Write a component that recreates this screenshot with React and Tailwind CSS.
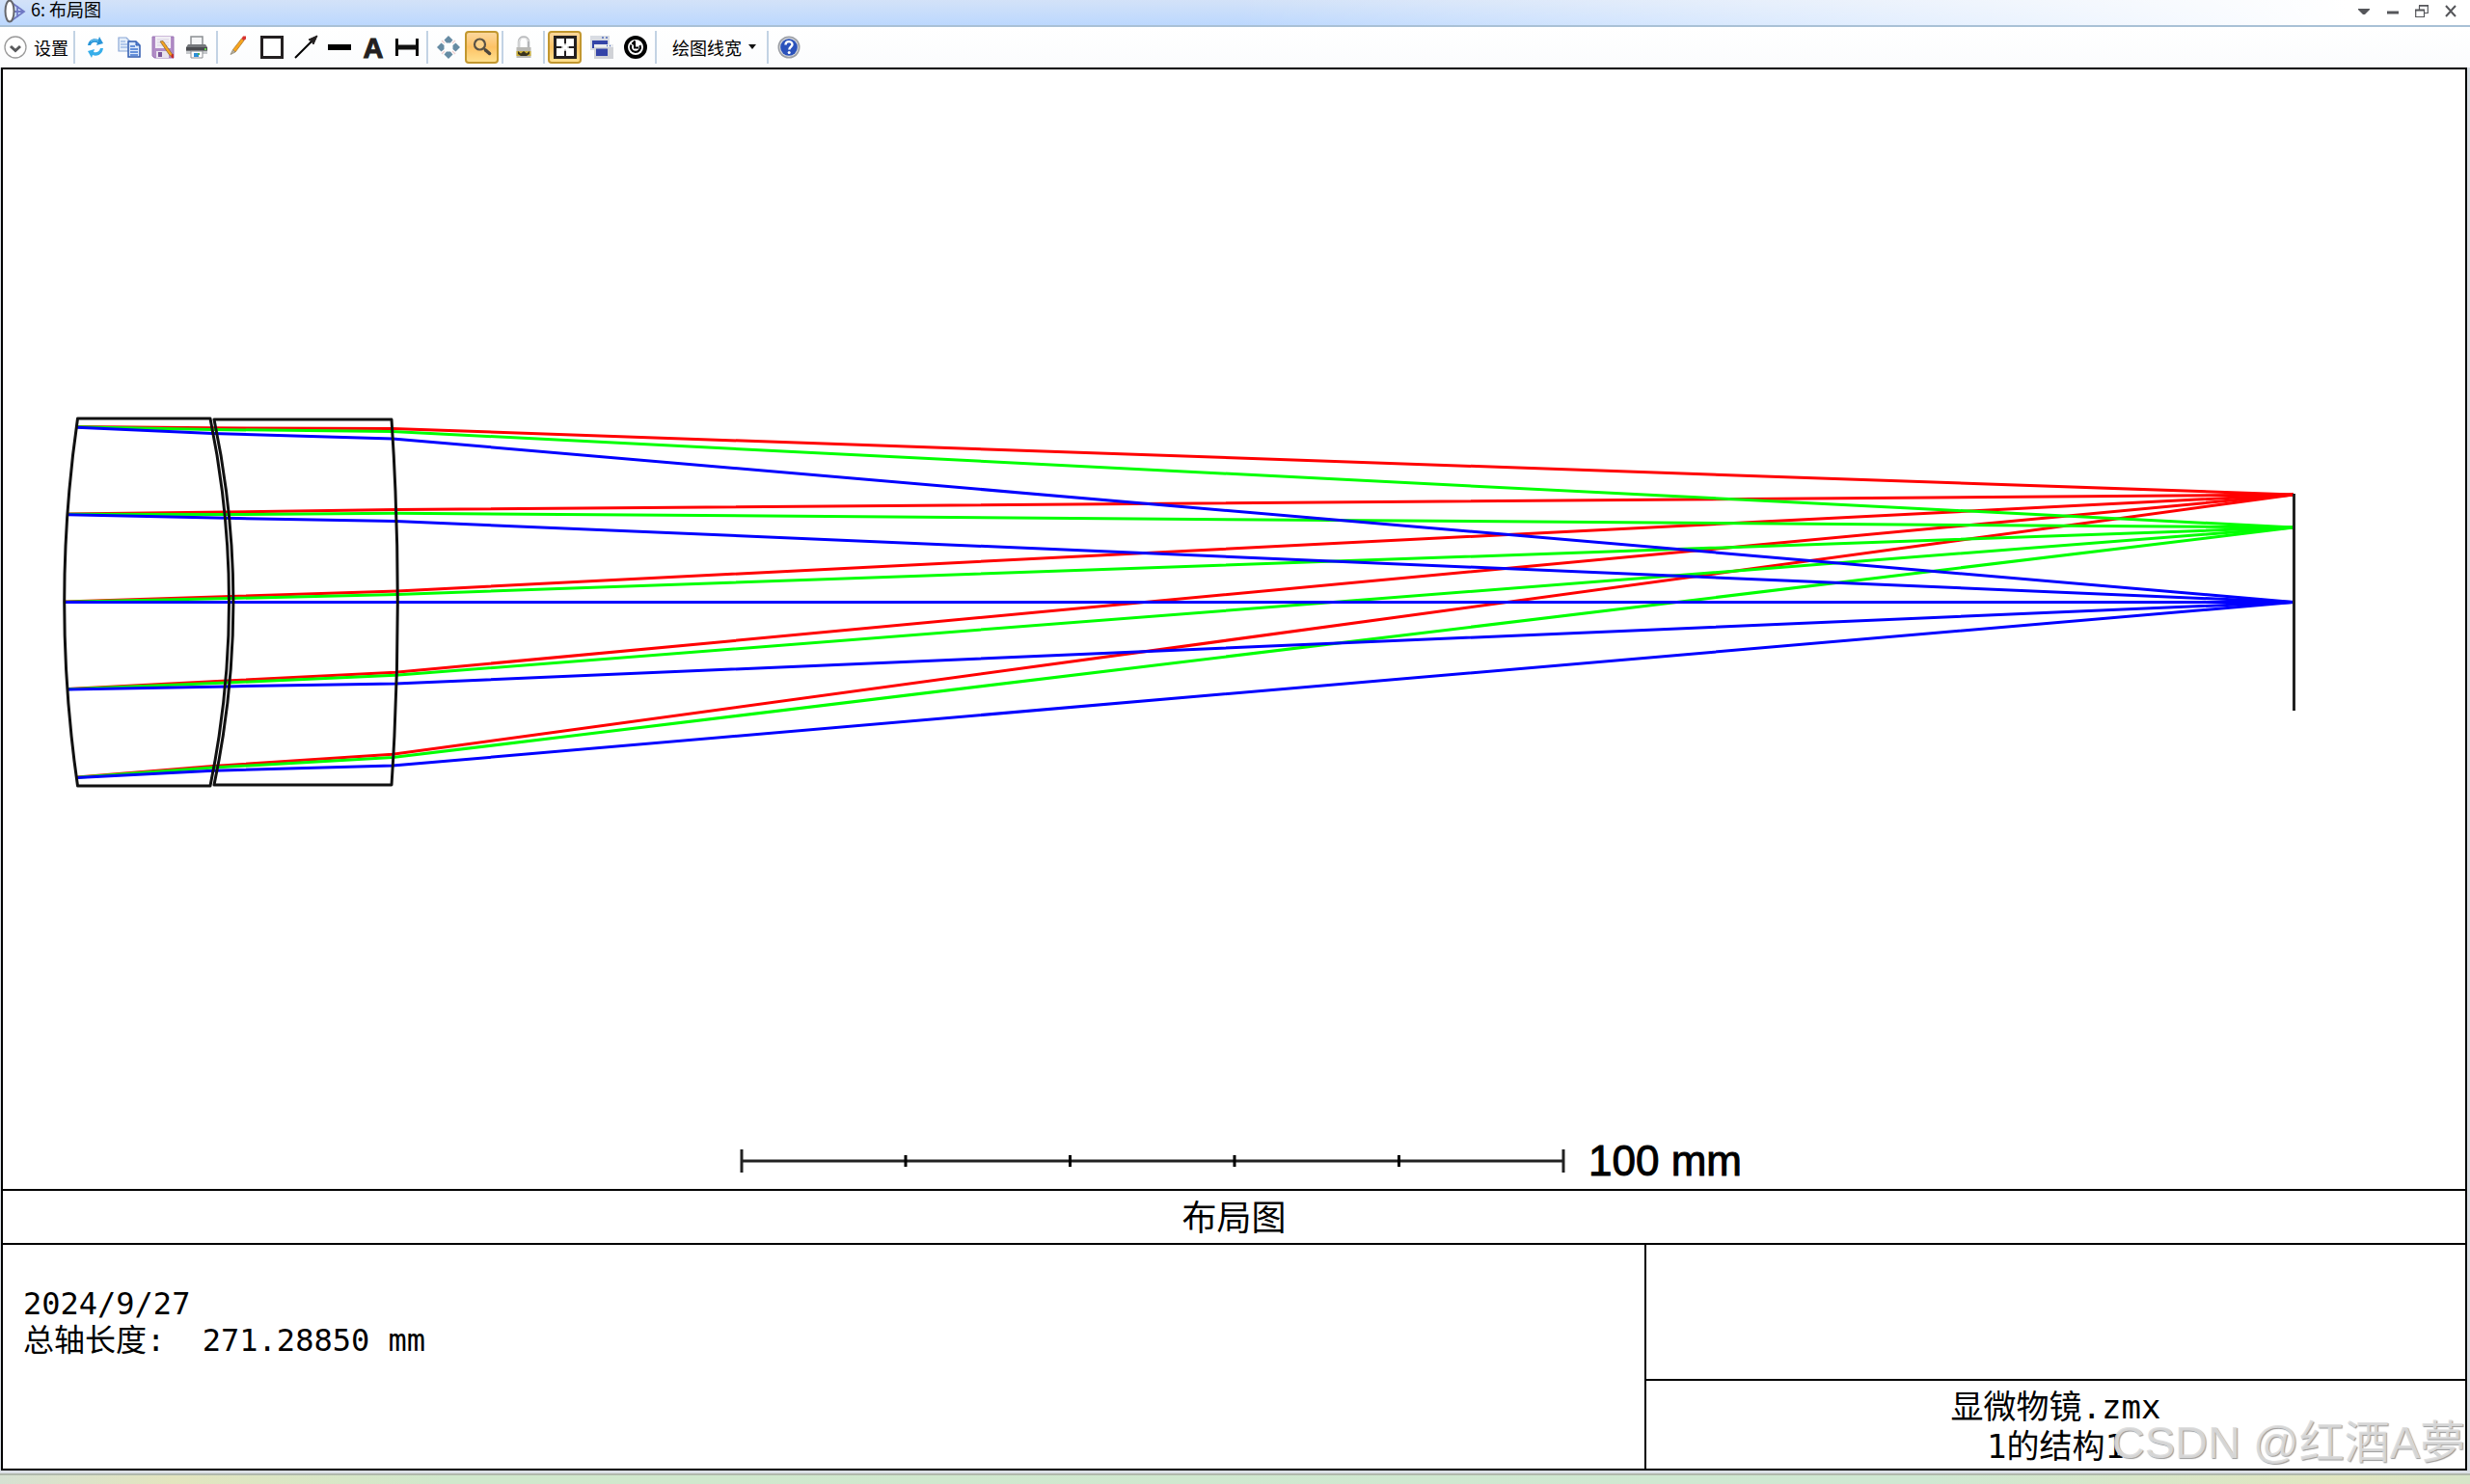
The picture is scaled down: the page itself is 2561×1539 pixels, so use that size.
import React, { useState } from 'react';

// Each ray passes the front surface, the air gap, the back surface and the image plane
const rays = [
  {
    color: '#ff0000',
    paths: [
      [[80, 442.5], [220, 443.8], [407, 444.5], [2378, 513]],
      [[70.5, 533], [235, 531], [410, 528.5], [2378, 513]],
      [[67, 624], [240, 618.5], [412, 613], [2378, 513]],
      [[70.5, 714.5], [235, 706], [410, 697.3], [2378, 513]],
      [[80, 806], [221, 794.5], [407, 782.3], [2378, 513]],
    ],
  },
  {
    color: '#00ff00',
    paths: [
      [[80, 442.8], [220, 445.5], [407, 447.5], [2378, 547]],
      [[70.5, 533.3], [235, 533.6], [410, 532.2], [2378, 547]],
      [[67, 624.3], [240, 620.5], [412, 616.4], [2378, 547]],
      [[70.5, 714.8], [235, 708], [410, 700.3], [2378, 547]],
      [[80, 806.2], [221, 796], [407, 785.6], [2378, 547]],
    ],
  },
  {
    color: '#0000ff',
    paths: [
      [[80, 443.2], [220, 449.5], [407, 455], [2378, 624.5]],
      [[70.5, 533.7], [235, 537.3], [410, 540.5], [2378, 624.5]],
      [[67, 624.5], [240, 624.5], [412, 624.5], [2378, 624.5]],
      [[70.5, 715], [235, 711.9], [410, 709], [2378, 624.5]],
      [[80, 806.4], [221, 799.2], [407, 794], [2378, 624.5]],
    ],
  },
];

const ticks = [939, 1109.5, 1280, 1450.5];

const Separator = () => <div className="mx-[3px] h-[34px] w-[2px] shrink-0 bg-[#c3d3e4]" />;

const ToolButton = ({ label, active, onClick, children }) => (
  <button
    type="button"
    aria-label={label}
    onClick={onClick}
    className={
      active
        ? 'flex h-[34px] w-[35px] shrink-0 items-center justify-center rounded-sm border-2 border-[#c2972f] bg-gradient-to-b from-[#fcd79c] via-[#fdc264] to-[#fee08e]'
        : 'flex h-[34px] w-[35px] shrink-0 items-center justify-center rounded-sm'
    }
  >
    <svg viewBox="0 0 24 24" className="h-6 w-6 shrink-0 overflow-visible">
      {children}
    </svg>
  </button>
);

const RefreshIcon = () => (
  <g>
    <path d="M4 10C5 4 10 2 15 4L16 1L20 8L13 10L14 7.500C11 6 8 7 7 10Z" fill="#2794d8" />
    <path d="M20 13C19 20 13 22 9 20L8 23L4 16L11 14L10 17C13 18 16 17 17 13Z" fill="#36aeea" />
    <path d="M7 6C9 4.500 12 4 15 5.500" stroke="#7fd0f5" strokeWidth="1" fill="none" />
  </g>
);

const CopyIcon = () => (
  <g>
    <path d="M1 2H9L13 6V16H1Z" fill="#e6effa" stroke="#8aa7d6" strokeWidth="1.2" />
    <path d="M3 6H8M3 9H10M3 12H10" stroke="#7fa3dc" strokeWidth="1.2" />
    <path d="M11 6H19L23 10V22H11Z" fill="#dce9fb" stroke="#2f5bb0" strokeWidth="1.500" />
    <path d="M19 6V10H23" fill="#5a86d4" stroke="#2f5bb0" />
    <path d="M13 11H18M13 14H21M13 17H21M13 20H21" stroke="#3f74cf" strokeWidth="1.300" />
  </g>
);

const SaveIcon = () => (
  <g>
    <path d="M1 1H23V23H3L1 21Z" fill="#b18cc6" stroke="#9a74b4" />
    <path d="M4 1H20V13H4Z" fill="#f1eef4" />
    <path d="M6 4H18M6 7H18M6 10H18" stroke="#d9d1e0" />
    <path d="M5 16H18V23H5Z" fill="#e8e2ee" />
    <path d="M7 17H11V22H7Z" fill="#7c579a" />
    <path d="M9 6L12 5.500L21.500 19L22 22L19 20.500Z" fill="#f6a21c" stroke="#8d6a38" strokeWidth=".8" />
    <path d="M20.500 19.500L23 19V23.500L20.500 22.500Z" fill="#c52c2c" />
  </g>
);

const PrintIcon = () => (
  <g>
    <path d="M6 1H18V10H6Z" fill="#f5f6f7" stroke="#8c8f93" strokeWidth="1.500" />
    <path d="M3 9H21L23 12V19H1V12Z" fill="#75787c" />
    <path d="M1 12H23V15H1Z" fill="#4a4c50" />
    <path d="M1 16H23V19H1Z" fill="#c7cacd" />
    <path d="M20 13H22V15H20Z" fill="#65d64b" />
    <path d="M6 16H18V23H6Z" fill="#fff" stroke="#8c8f93" />
    <path d="M9 18H14V22H9Z" fill="#2c8ed6" />
    <path d="M13 18H15V20H13Z" fill="#4bb05b" />
  </g>
);

const PencilIcon = () => (
  <g>
    <path d="M6.500 14.500L15.500 3L18 5L9 17Z" fill="#f8a51d" stroke="#a8762e" strokeWidth=".8" />
    <path d="M6.500 14.500L9 17L4 19.500Z" fill="#b9b19e" stroke="#8f8874" strokeWidth=".8" />
    <path d="M15.500 3L17 .500H20V3.500L18 5Z" fill="#d8332e" />
  </g>
);

const PanIcon = () => (
  <g fill="#668ba3">
    <path d="M12 0L16.500 4.500L14 7.500H10L7.500 4.500Z" />
    <path d="M12 24L16.500 19.500L14 16.500H10L7.500 19.500Z" />
    <path d="M0 12L4.500 7.500L7.500 10V14L4.500 16.500Z" />
    <path d="M24 12L19.500 7.500L16.500 10V14L19.500 16.500Z" />
    <path d="M8 8L5 5M16 8L19 5M8 16L5 19M16 16L19 19" stroke="#eccfcf" strokeWidth="1.500" />
  </g>
);

const ZoomIcon = () => (
  <g>
    <circle cx="9.500" cy="9" r="5.500" fill="#fbd188" stroke="#5b5346" strokeWidth="2.200" />
    <path d="M13.500 13L15.500 15" stroke="#5b5346" strokeWidth="2" />
    <path d="M15.500 15L19.500 18.500" stroke="#4c463c" strokeWidth="3.500" strokeLinecap="round" />
  </g>
);

const LockIcon = () => (
  <g>
    <path d="M7 13V6C7 0 17 0 17 6V13" fill="none" stroke="#b4b6b8" strokeWidth="2.500" />
    <path d="M7 12V6C7 1 17 1 17 6" fill="none" stroke="#ececec" strokeWidth="1" />
    <path d="M4.500 12H19.500V23H4.500Z" fill="#b9b9b5" />
    <path d="M4.500 16H19.500V21H4.500Z" fill="#cdb036" />
    <path d="M6 16L9 18.500L12 16L15 18.500L18 16V19L15 21H9L6 19Z" fill="#39331e" />
  </g>
);

const FitIcon = () => (
  <g>
    <path d="M1.500 1.500H22.500V22.500H1.500Z" fill="#fff" stroke="#231f20" strokeWidth="3" />
    <path d="M12 3V8M12 16V21M3 12H8M16 12H21" stroke="#231f20" strokeWidth="2" />
    <path d="M12 8V9.500M12 14.500V16M8 12H9.500M14.500 12H16" stroke="#a9a9a9" strokeWidth="2" />
  </g>
);

const WindowsIcon = () => (
  <g>
    <path d="M0 0H20V15H0Z" fill="#d9dce3" />
    <path d="M2 5H18V13H2Z" fill="#3444a8" />
    <path d="M12 2H14M16 2H18" stroke="#506bbb" strokeWidth="1.500" />
    <path d="M4 9H24V24H4Z" fill="#d0d2d7" />
    <path d="M4 9H24V12H4Z" fill="#e9ebef" />
    <path d="M6 13.500H18V21H6Z" fill="#3444a8" />
    <path d="M17 10.500H18M20 10.500H21" stroke="#506bbb" strokeWidth="1.500" />
  </g>
);

const ResetIcon = () => (
  <g fill="none" stroke="#000">
    <circle cx="12" cy="12" r="10" strokeWidth="4" />
    <path d="M7.500 9.500A5 5 0 1 0 16.500 10" strokeWidth="2.200" />
    <path d="M11 5.500V12.500H15" strokeWidth="2" />
    <path d="M8 8L11 5.500V10Z" fill="#000" strokeWidth="1" />
  </g>
);

const HelpIcon = () => (
  <g>
    <circle cx="12" cy="12" r="11.500" fill="#9b9ea4" />
    <circle cx="12" cy="12" r="10" fill="#d4d7dc" />
    <circle cx="12" cy="12" r="8.800" fill="#2b52bb" />
    <path d="M8.500 9.500C8.500 5 15.500 5 15.500 9.200C15.500 11.500 12.300 11.500 12.300 14.500" fill="none" stroke="#fff" strokeWidth="2.400" />
    <circle cx="12.200" cy="17.500" r="1.500" fill="#fff" />
  </g>
);

const TitleBar = () => (
  <header className="h-7 border-b-2 border-[#a9c1d6] bg-gradient-to-b from-[#d3e2f8] to-[#bcd8fe]">
    <div className="flex h-full items-start bg-gradient-to-r from-transparent from-50% to-white to-95%">
      <svg viewBox="0 0 24 24" className="ml-1 h-6 w-6 shrink-0">
        <path d="M7 2L21 12L7 22M7 12H21M14 6V18" fill="none" stroke="#7079c4" strokeWidth="1.800" />
        <ellipse cx="6" cy="11.500" rx="4.500" ry="11" fill="#fff" stroke="#66676c" strokeWidth="2" />
      </svg>
      <h1 className="ml-1 flex-1 text-[18px] leading-[18px] text-black">6: 布局图</h1>
      <div className="mr-[5px] flex text-[#55565a]">
        <button type="button" aria-label="菜单" className="flex h-6 w-[30px] items-center justify-center">
          <svg viewBox="0 0 14 14" className="h-[14px] w-[14px]"><path d="M1 4H13V5L8 10H6L1 5Z" fill="currentColor" /></svg>
        </button>
        <button type="button" aria-label="最小化" className="flex h-6 w-[30px] items-center justify-center">
          <svg viewBox="0 0 14 14" className="h-[14px] w-[14px]"><path d="M1 6.500H13V9.500H1Z" fill="currentColor" /></svg>
        </button>
        <button type="button" aria-label="还原" className="flex h-6 w-[30px] items-center justify-center">
          <svg viewBox="0 0 14 14" className="h-[14px] w-[14px]" fill="none" stroke="currentColor">
            <path d="M.7 5.500H9.500V12.500H.7Z" strokeWidth="1.200" />
            <path d="M0 5.500H10M4 .800H14" strokeWidth="2" />
            <path d="M4.500 5V1M13.300 1V8.500H9.500" strokeWidth="1.200" />
          </svg>
        </button>
        <button type="button" aria-label="关闭" className="flex h-6 w-[30px] items-center justify-center">
          <svg viewBox="0 0 14 14" className="h-[14px] w-[14px]"><path d="M2 1L12 12M12 1L2 12" stroke="currentColor" strokeWidth="2" /></svg>
        </button>
      </div>
    </div>
  </header>
);

const Toolbar = () => {
  const [zoom, setZoom] = useState(true);
  const [fit, setFit] = useState(true);

  return (
    <nav className="flex h-[42px] items-center bg-gradient-to-b from-white to-[#fbfcfd] text-[18px] text-black">
      <button type="button" className="flex shrink-0 items-center gap-[7px] pl-1 pr-[2px]">
        <svg viewBox="0 0 24 24" className="h-6 w-6">
          <circle cx="12" cy="12" r="11" fill="#fff" stroke="#9a9a9a" strokeWidth="1.300" />
          <path d="M7 11L12 15.500L17 11" fill="none" stroke="#58595b" strokeWidth="3" />
        </svg>
        <span>设置</span>
      </button>
      <Separator />
      <ToolButton label="更新"><RefreshIcon /></ToolButton>
      <ToolButton label="复制"><CopyIcon /></ToolButton>
      <ToolButton label="保存"><SaveIcon /></ToolButton>
      <ToolButton label="打印"><PrintIcon /></ToolButton>
      <Separator />
      <ToolButton label="铅笔"><PencilIcon /></ToolButton>
      <ToolButton label="矩形">
        <path d="M1.500 1.500H22.500V22.500H1.500Z" fill="#fff" stroke="#231f20" strokeWidth="3" />
      </ToolButton>
      <ToolButton label="箭头">
        <path d="M1 23L18 6" stroke="#000" strokeWidth="2" />
        <path d="M24 0L20 9L18 6L15 4Z" fill="#231f20" stroke="#231f20" />
      </ToolButton>
      <ToolButton label="直线">
        <path d="M0 9H24V15H0Z" fill="#000" />
      </ToolButton>
      <ToolButton label="文本">
        <text x="12" y="23" textAnchor="middle" fontSize="29" fontWeight="700" fill="#231f20" stroke="#231f20" className="font-['Liberation_Sans',sans-serif]">A</text>
      </ToolButton>
      <ToolButton label="测量">
        <path d="M1.500 3V21M22.500 3V21" stroke="#000" strokeWidth="3" />
        <path d="M2 12H22" stroke="#111" strokeWidth="5" />
      </ToolButton>
      <Separator />
      <ToolButton label="平移"><PanIcon /></ToolButton>
      <ToolButton label="缩放" active={zoom} onClick={() => setZoom(!zoom)}><ZoomIcon /></ToolButton>
      <Separator />
      <ToolButton label="锁定"><LockIcon /></ToolButton>
      <Separator />
      <ToolButton label="适合窗口" active={fit} onClick={() => setFit(!fit)}><FitIcon /></ToolButton>
      <div className="ml-[3px] flex">
        <ToolButton label="窗口"><WindowsIcon /></ToolButton>
        <ToolButton label="重置"><ResetIcon /></ToolButton>
      </div>
      <Separator />
      <button type="button" className="flex shrink-0 items-center gap-[7px] pl-[13px] pr-2">
        <span>绘图线宽</span>
        <svg viewBox="0 0 8 6" className="h-[6px] w-2"><path d="M0 0H8L4 5Z" fill="#111" /></svg>
      </button>
      <Separator />
      <ToolButton label="帮助"><HelpIcon /></ToolButton>
    </nav>
  );
};

const LayoutPlot = () => (
  <svg viewBox="3 72 2553 1161" className="block h-auto w-full" fill="none" strokeWidth="3">
    {rays.map((field) =>
      field.paths.map((points, i) => (
        <polyline key={field.color + i} points={points.map((p) => p.join(',')).join(' ')} stroke={field.color} />
      ))
    )}

    {/* Lens elements */}
    <g stroke="#111" strokeLinejoin="round">
      <path d="M80.500 434H218A950 950 0 0 1 218 815H80.500A1330 1330 0 0 1 80.500 434Z" />
      <path d="M222 435H406A2853 2853 0 0 1 406 814H222A921 921 0 0 0 222 435Z" />
    </g>

    {/* Image plane */}
    <path d="M2378.500 512V737" stroke="#222" />

    {/* Scale bar */}
    <g stroke="#222">
      <path d="M769 1204H1621M769 1192V1216M1621 1192V1216" />
      {ticks.map((x) => (
        <path key={x} d={`M${x} 1198V1210`} stroke="#000" />
      ))}
    </g>
    <text x="1647" y="1219" fontSize="44" fill="#000" stroke="#000" strokeWidth="1" className="font-['Liberation_Sans',sans-serif]">100 mm</text>
  </svg>
);

const App = () => {
  return (
    <div className="flex min-h-screen flex-col bg-[#dadfe5] font-['Noto_Sans_CJK_SC',sans-serif]">
      <TitleBar />
      <Toolbar />

      <main className="relative ml-px mr-[3px] border-2 border-black bg-white text-black">
        <LayoutPlot />

        <h2 className="border-y-2 border-black pb-1 text-center text-[36px] leading-[50px]">布局图</h2>

        <div className="grid grid-cols-3 font-['DejaVu_Sans_Mono','Noto_Sans_CJK_SC',monospace]">
          <div className="col-span-2 whitespace-pre pl-[21px] pt-[42px] text-[32px] leading-[38px]">
            <p>2024/9/27</p>
            <p>总轴长度:  271.28850 mm</p>
          </div>
          <div className="border-l-2 border-black">
            <div className="h-[139px]" />
            <div className="border-t-2 border-black pb-[2px] pt-[7px] text-center text-[34px] leading-[41px]">
              <p>显微物镜.zmx</p>
              <p>1的结构1</p>
            </div>
          </div>
        </div>

        <div className="pointer-events-none absolute bottom-0 right-0 whitespace-nowrap font-['Liberation_Sans','Noto_Sans_CJK_SC',sans-serif] text-[47px] leading-[54px] text-[#dedede]/90 [text-shadow:1px_1px_1px_#999]">
          CSDN @红酒A夢
        </div>
      </main>

      <footer className="mt-[3px] flex-1 border-t-2 border-[#b0b9ac] bg-[linear-gradient(to_right,#d6e1d2,#e3e5bf_7%,#d0e8cc_18%,#cfe8d2_78%,#e1e6c0_95%,#d6e5c8)]" />
    </div>
  );
};

export default App;
